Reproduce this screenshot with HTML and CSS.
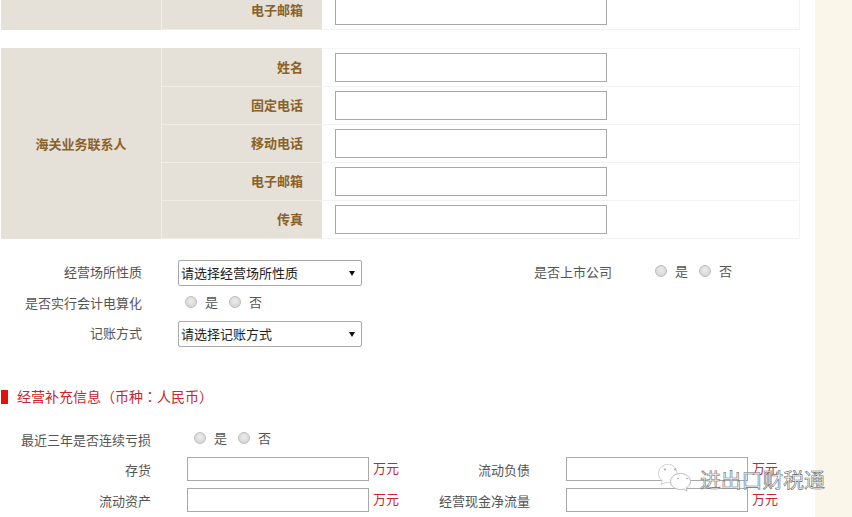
FILE: index.html
```html
<!DOCTYPE html>
<html lang="zh-CN">
<head>
  <meta charset="UTF-8" />
  <title>经营补充信息</title>
  <link rel="stylesheet" href="styles.css">
</head>
<body>
  <div class="page">
    <main class="content">
      <!-- Contact tables -->
      <table class="contact contact-cut">
        <tr>
          <td class="group"></td>
          <th>电子邮箱</th>
          <td class="cell"><input type="text" class="box"></td>
        </tr>
      </table>

      <table class="contact">
        <tr>
          <td class="group" rowspan="5">海关业务联系人</td>
          <th>姓名</th>
          <td class="cell"><input type="text" class="box"></td>
        </tr>
        <tr>
          <th>固定电话</th>
          <td class="cell"><input type="text" class="box"></td>
        </tr>
        <tr>
          <th>移动电话</th>
          <td class="cell"><input type="text" class="box"></td>
        </tr>
        <tr>
          <th>电子邮箱</th>
          <td class="cell"><input type="text" class="box"></td>
        </tr>
        <tr>
          <th>传真</th>
          <td class="cell"><input type="text" class="box"></td>
        </tr>
      </table>

      <!-- Basic options -->
      <div class="options">
        <div class="row row-select">
          <label class="label">经营场所性质</label>
          <div class="select-wrap"><select class="select"><option>请选择经营场所性质</option></select></div>
          <label class="label label-right">是否上市公司</label>
          <div class="radios radios-right">
            <input type="radio" class="radio" name="listed"><span>是</span>
            <input type="radio" class="radio" name="listed"><span>否</span>
          </div>
        </div>
        <div class="row row-radio">
          <label class="label">是否实行会计电算化</label>
          <div class="radios">
            <input type="radio" class="radio" name="computer"><span>是</span>
            <input type="radio" class="radio" name="computer"><span>否</span>
          </div>
        </div>
        <div class="row row-select">
          <label class="label">记账方式</label>
          <div class="select-wrap"><select class="select"><option>请选择记账方式</option></select></div>
        </div>
      </div>

      <!-- Supplementary info -->
      <h2 class="section-title" lang="zh-Hant">经营补充信息（币种：人民币）</h2>

      <div class="extra">
        <div class="extra-row extra-radio">
          <label class="extra-label">最近三年是否连续亏损</label>
          <div class="radios">
            <input type="radio" class="radio" name="loss"><span>是</span>
            <input type="radio" class="radio" name="loss"><span>否</span>
          </div>
        </div>
        <div class="extra-row">
          <label class="extra-label">存货</label>
          <input type="text" class="money">
          <span class="unit">万元</span>
          <label class="extra-label extra-label-right">流动负债</label>
          <input type="text" class="money">
          <span class="unit">万元</span>
        </div>
        <div class="extra-row">
          <label class="extra-label">流动资产</label>
          <input type="text" class="money">
          <span class="unit">万元</span>
          <label class="extra-label extra-label-right">经营现金净流量</label>
          <input type="text" class="money">
          <span class="unit">万元</span>
        </div>
      </div>
    </main>
    <div class="strip"></div>
  </div>

  <!-- Watermark -->
  <div class="watermark">
    <svg class="watermark-icon" width="34" height="28" viewBox="0 0 34 28" fill="none">
      <path d="M9.500.500C4.500.500.500 4.500.500 9.500c0 3 1.500 5.700 3.800 7.300L3 20.500l4.300-2c.7.200 1.500.300 2.200.300 1 0 2-.2 3-.5 3-3 5-8 6.500-8.800-.3-5.500-4.500-9.500-9.500-9.500z" fill="#fff" stroke="#c4c4c4" stroke-width=".8"/>
      <path d="M22.500 9.500c-5.500 0-10 3.500-10 8s4.500 8 10 8c1 0 2-.1 3-.4l3.500 2-.8-3.300c2.800-1.500 4.300-3.700 4.300-6.300 0-4.500-4.500-8-10-8z" fill="#fff" stroke="#aaa" stroke-width=".8"/>
      <g fill="#999">
        <circle cx="7" cy="5.500" r=".9"/>
        <circle cx="17" cy="5.500" r=".9"/>
        <circle cx="20" cy="14.500" r=".8"/>
        <circle cx="29" cy="14.500" r=".8"/>
      </g>
    </svg>
    <span class="watermark-text">进出口财税通</span>
  </div>
</body>
</html>
```

FILE: styles.css
```css
body {
  margin: 0;
  height: 517px;
  overflow: hidden;
  font-family: "Noto Sans CJK SC", "Liberation Sans", sans-serif;
  font-size: 13px;
  color: #555;
  background: #fff;
}

.page {
  display: flex;
  height: 517px;
  overflow: hidden;
}

.content {
  width: 815px;
  flex: none;
}

.strip {
  flex: 1;
  background: #faf6ea;
}

/* Contact tables */
.contact {
  width: 799px;
  margin-left: 1px;
  border-collapse: separate;
  border-spacing: 0;
  table-layout: fixed;
}

.contact-cut {
  margin-top: -9px;
  margin-bottom: 18px;
}

.contact th,
.contact td {
  height: 38px;
  padding: 0;
  box-sizing: border-box;
}

.contact tr:first-child th,
.contact tr:first-child td {
  height: 39px;
}

.group {
  width: 161px;
  background: #e5e0d8;
  border-right: 1px solid #f3f0ea;
  text-align: center;
  font-weight: bold;
  color: #8a6228;
}

.contact th {
  width: 160px;
  padding: 0 19px 2px 0;
  background: #e5e0d8;
  border-bottom: 1px solid #f0ece6;
  text-align: right;
  font-size: 13px;
  color: #8a6228;
}

.contact .cell {
  padding: 4px 0 0 13px;
  border-bottom: 1px solid #f2f2f2;
  border-right: 1px solid #f4f4f4;
  vertical-align: top;
}

.contact tr:first-child .cell {
  border-top: 1px solid #f6f6f6;
}

.box {
  display: block;
  width: 272px;
  height: 29px;
  box-sizing: border-box;
  border: 1px solid #a9a9a9;
  background: #fff;
  padding: 0;
}

/* Basic options */
.options {
  margin-top: 21px;
  display: flex;
  flex-direction: column;
  gap: 5px;
}

.row {
  display: flex;
  align-items: center;
}

.row-select {
  height: 26px;
}

.row-radio {
  height: 25px;
}

.label {
  width: 142px;
  flex: none;
  text-align: right;
  margin-right: 36px;
  padding-bottom: 2px;
  line-height: 24px;
}

.label-right {
  width: 78px;
  margin-left: 172px;
}

.select-wrap {
  position: relative;
  width: 184px;
  height: 26px;
}

.select-wrap::after {
  content: "";
  position: absolute;
  right: 7px;
  top: 11px;
  border-left: 3px solid transparent;
  border-right: 3px solid transparent;
  border-top: 5px solid #111;
}

.select {
  appearance: none;
  display: block;
  width: 100%;
  height: 26px;
  box-sizing: border-box;
  padding: 0 0 2px 2px;
  border: 1px solid #a9a9a9;
  border-radius: 2px;
  background: #fff;
  font-family: inherit;
  font-size: 13px;
  color: #222;
}

.radios {
  display: flex;
  align-items: center;
  padding-left: 7px;
  margin-top: -3px;
}

.radios-right {
  margin-top: -4px;
}

.radio {
  appearance: none;
  width: 12px;
  height: 12px;
  margin: 0 8px 0 0;
  border: 1px solid #bdbdbd;
  border-radius: 50%;
  box-sizing: border-box;
  background: radial-gradient(circle at 50% 40%, #ececec, #cfcfcf);
}

.radios span {
  width: 24px;
  margin-top: -2px;
  font-size: 13px;
  color: #555;
}

/* Supplementary info */
.section-title {
  margin: 43px 0 0 1px;
  padding-left: 9px;
  height: 14px;
  line-height: 12px;
  border-left: 7px solid #e0120b;
  font-family: "Noto Sans CJK TC", sans-serif;
  font-size: 14px;
  font-weight: normal;
  color: #c9252b;
  text-spacing-trim: space-all;
}

.extra {
  margin-top: 24px;
  display: flex;
  flex-direction: column;
  gap: 7px;
}

.extra-row {
  display: flex;
  align-items: center;
  height: 24px;
}

.extra-radio {
  margin-bottom: -2px;
}

.extra-label {
  width: 151px;
  flex: none;
  margin-right: 36px;
  text-align: right;
}

.extra-radio .extra-label {
  padding-bottom: 2px;
}

.extra-radio .radios {
  margin-top: -4px;
}

.extra-label-right {
  width: 131px;
}

.money {
  width: 182px;
  height: 24px;
  flex: none;
  box-sizing: border-box;
  border: 1px solid #a9a9a9;
  background: #fff;
  padding: 0;
}

.unit {
  width: 26px;
  flex: none;
  margin-left: 4px;
  margin-top: -4px;
  color: #c9252b;
}

/* Watermark */
.watermark {
  position: absolute;
  left: 658px;
  top: 464px;
  display: flex;
  align-items: flex-start;
  gap: 8px;
}

.watermark-icon {
  display: block;
  flex: none;
}

.watermark-text {
  font-size: 20.8px;
  line-height: 30px;
  color: rgba(255, 255, 255, .85);
  -webkit-text-stroke: .6px #6a6a6a;
  white-space: nowrap;
}
```
